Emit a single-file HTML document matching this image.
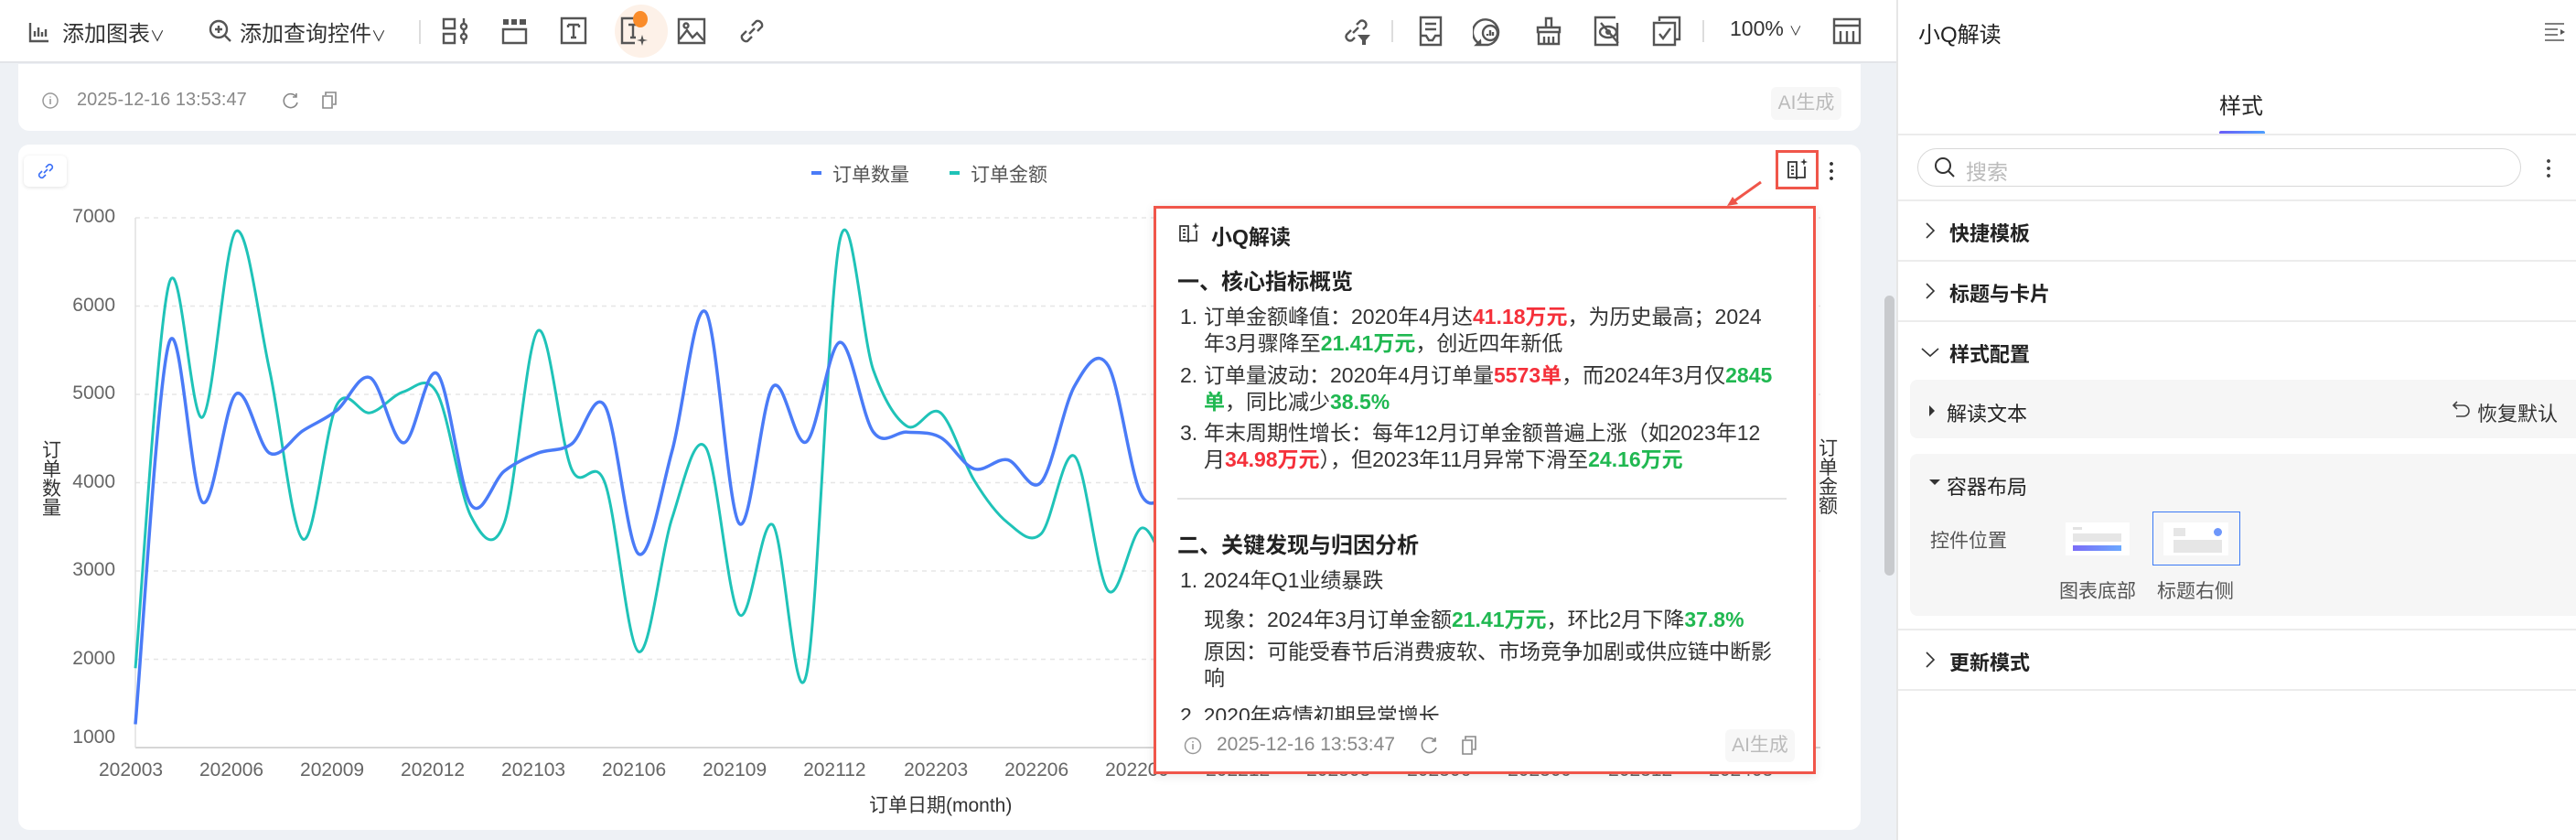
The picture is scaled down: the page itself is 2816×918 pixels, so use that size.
<!DOCTYPE html>
<html><head><meta charset="utf-8">
<style>
*{margin:0;padding:0;box-sizing:border-box}
body{width:2816px;height:918px;overflow:hidden;background:#eef1f5;font-family:"Liberation Sans","Noto Sans CJK SC",sans-serif;color:#333;position:relative}
.a{position:absolute;white-space:nowrap}
.tb{left:0;top:0;width:2073px;height:69px;background:#fff;border-bottom:2px solid #e2e4e8}
.tt{font-size:24px;color:#333;top:17px}
.ic{stroke:#555;fill:none;stroke-width:2.4}
.card{background:#fff;border-radius:12px}
.yl{font-size:21px;color:#666;text-align:right;width:60px;left:66px}
.xl{font-size:21px;color:#666;top:830px}
.pp{font-size:23px;color:#333;line-height:29px}
.r{color:#f5303a;font-weight:bold}
.g{color:#20b851;font-weight:bold}
.side{left:2073px;top:0;width:743px;height:918px;background:#fff;border-left:2px solid #e6e6e6}
.row{font-size:22px;font-weight:bold;color:#222}
.hr{height:2px;background:#ececec;left:2075px;width:741px}
</style></head><body>
<!-- toolbar -->
<div class="a tb"></div>
<svg class="a" style="left:30px;top:22px" width="26" height="26" viewBox="0 0 26 26"><path class="ic" d="M3 3V23H23M8 18V12M12 18V8M16 18V13M20 18V10" stroke-width="2"/></svg>
<div class="a tt" style="left:68px">添加图表<span style="font-size:16px">∨</span></div>
<svg class="a" style="left:227px;top:20px" width="28" height="28" viewBox="0 0 28 28"><circle class="ic" cx="12" cy="12" r="9"/><path class="ic" d="M12 8V16M8 12H16M19 19L25 25"/></svg>
<div class="a tt" style="left:262px">添加查询控件<span style="font-size:16px">∨</span></div>
<div class="a" style="left:458px;top:22px;width:2px;height:26px;background:#ddd"></div>
<svg class="a" style="left:483px;top:18px" width="30" height="32" viewBox="0 0 30 32"><path class="ic" d="M2 3H14V13H2ZM2 19H14V29H2ZM24 2V30"/><circle cx="24" cy="11" r="3" fill="#fff" stroke="#555" stroke-width="2.4"/><circle cx="24" cy="22" r="3" fill="#fff" stroke="#555" stroke-width="2.4"/></svg>
<svg class="a" style="left:548px;top:19px" width="30" height="30" viewBox="0 0 30 30"><path d="M2 2H8V8H2ZM11 2H17V8H11ZM20 2H27V8H20Z" fill="#555"/><path class="ic" d="M2 13H27V28H2Z"/></svg>
<svg class="a" style="left:612px;top:18px" width="30" height="31" viewBox="0 0 30 31"><path class="ic" d="M2 2H28V29H2Z"/><path class="ic" d="M9 9H21M15 9V23M12 23H18M9 9V12M21 9V12"/></svg>
<div class="a" style="left:672px;top:5px;width:58px;height:58px;border-radius:50%;background:#fdf1e8"></div>
<svg class="a" style="left:678px;top:18px" width="32" height="32" viewBox="0 0 32 32"><path class="ic" d="M22 2H2V29H16"/><path class="ic" d="M9 9H19M14 9V23M11 23H17"/><path d="M24 20L25.5 25L30 26L25.5 27L24 32L22.5 27L18 26L22.5 25Z" fill="#555"/></svg>
<div class="a" style="left:692px;top:12px;width:16px;height:18px;border-radius:50%;background:#fa8c2a"></div>
<svg class="a" style="left:740px;top:19px" width="32" height="30" viewBox="0 0 32 30"><path class="ic" d="M2 2H30V28H2Z"/><path class="ic" d="M3 24L11 14L17 22L22 17L29 25"/><circle cx="10" cy="9" r="2.5" class="ic" stroke-width="2"/></svg>
<svg class="a" style="left:806px;top:18px" width="32" height="32" viewBox="0 0 32 32"><path class="ic" d="M13 19L19 13M10 16L5 21A5 5 0 0 0 11 27L16 22M16 10L21 5A5 5 0 0 1 27 11L22 16"/></svg>
<!-- right tools -->
<svg class="a" style="left:1469px;top:19px" width="30" height="32" viewBox="0 0 30 32"><path class="ic" d="M10 17L16 11M8 14L3 19A4.5 4.5 0 0 0 9 25L12 22M14 8L18 4A4.5 4.5 0 0 1 24 10L21 13"/><path d="M15 19H29L24 25V30H20V25Z" fill="#555"/></svg>
<div class="a" style="left:1521px;top:22px;width:2px;height:24px;background:#ddd"></div>
<svg class="a" style="left:1551px;top:17px" width="26" height="34" viewBox="0 0 26 34"><path class="ic" d="M2 2H24V32H2ZM7 9H19M7 15H19M2 22L8 22L11 27H15L18 22H24"/></svg>
<svg class="a" style="left:1610px;top:18px" width="34" height="34" viewBox="0 0 34 34"><path class="ic" d="M8 30A14 14 0 1 1 17 31H4L8 27A14 14 0 0 1 8 30"/><circle class="ic" cx="19" cy="18" r="8"/><path class="ic" d="M16 21V19M19 21V15M22 21V17" stroke-width="2"/></svg>
<svg class="a" style="left:1678px;top:18px" width="30" height="32" viewBox="0 0 30 32"><path class="ic" d="M12 2H18V12H12ZM3 12H27V17H3ZM4 17V30H26V17M10 22V30M15 22V30M20 22V30"/></svg>
<svg class="a" style="left:1742px;top:17px" width="32" height="34" viewBox="0 0 32 34"><path class="ic" d="M24 2H2V32H26V8"/><ellipse class="ic" cx="16" cy="18" rx="9" ry="6"/><circle cx="16" cy="18" r="3" fill="#555"/><path class="ic" d="M8 8L27 30"/></svg>
<svg class="a" style="left:1806px;top:17px" width="32" height="34" viewBox="0 0 32 34"><path class="ic" d="M8 6V2H30V26H26M2 8H25V32H2ZM8 20L12 25L20 14"/></svg>
<div class="a" style="left:1861px;top:22px;width:2px;height:24px;background:#ddd"></div>
<div class="a tt" style="left:1891px;font-size:23px;top:18px">100%<span style="font-size:14px;margin-left:6px">∨</span></div>
<svg class="a" style="left:2003px;top:19px" width="32" height="30" viewBox="0 0 32 30"><path class="ic" d="M2 2H30V28H2ZM2 9H30M9 15V28M16 15V28M23 15V28"/></svg>

<!-- card1 -->
<div class="a card" style="left:20px;top:70px;width:2014px;height:73px;border-radius:0 0 12px 12px"></div>
<svg class="a" style="left:46px;top:101px" width="18" height="18" viewBox="0 0 18 18"><circle cx="9" cy="9" r="8" fill="none" stroke="#999" stroke-width="1.5"/><path d="M9 7V13M9 4.5V5.5" stroke="#999" stroke-width="1.6"/></svg>
<div class="a" style="left:84px;top:98px;font-size:20px;color:#888">2025-12-16 13:53:47</div>
<svg class="a" style="left:308px;top:100px" width="20" height="20" viewBox="0 0 20 20"><path d="M16 6A7.5 7.5 0 1 0 17 12M16 2V6H12" fill="none" stroke="#888" stroke-width="1.6"/></svg>
<svg class="a" style="left:351px;top:100px" width="18" height="20" viewBox="0 0 18 20"><path d="M5 4V1H16V14H13M2 5H12V18H2Z" fill="none" stroke="#888" stroke-width="1.6"/></svg>
<div class="a" style="left:1936px;top:95px;width:77px;height:36px;background:#f7f7f7;border-radius:6px;font-size:21px;color:#bbb;text-align:center;line-height:36px">AI生成</div>

<!-- chart card -->
<div class="a card" style="left:20px;top:158px;width:2014px;height:749px"></div>
<div class="a" style="left:26px;top:170px;width:47px;height:34px;border-radius:6px;background:#fff;box-shadow:0 1px 4px rgba(0,0,0,.12)"></div>
<svg class="a" style="left:40px;top:177px" width="20" height="20" viewBox="0 0 20 20"><path d="M8 12L12 8M6 10L3 13A3 3 0 0 0 7 17L10 14M10 6L13 3A3 3 0 0 1 17 7L14 10" fill="none" stroke="#3a6ff7" stroke-width="1.6"/></svg>
<div class="a" style="left:887px;top:187px;width:11px;height:4px;background:#4a7bf7"></div>
<div class="a" style="left:910px;top:175px;font-size:21px;color:#555">订单数量</div>
<div class="a" style="left:1038px;top:187px;width:11px;height:4px;background:#1fc3b8"></div>
<div class="a" style="left:1061px;top:175px;font-size:21px;color:#555">订单金额</div>
<div class="a yl" style="top:225px">7000</div>
<div class="a yl" style="top:322px">6000</div>
<div class="a yl" style="top:418px">5000</div>
<div class="a yl" style="top:515px">4000</div>
<div class="a yl" style="top:611px">3000</div>
<div class="a yl" style="top:708px">2000</div>
<div class="a yl" style="top:794px">1000</div>
<div class="a" style="left:46px;top:482px;width:24px;font-size:21px;line-height:21px;color:#333;white-space:normal">订单数量</div>
<div class="a" style="left:1988px;top:480px;width:24px;font-size:21px;line-height:21px;color:#333;white-space:normal">订单金额</div>
<svg class="a" id="ch" style="left:0;top:0" width="2000" height="918"></svg>
<div class="a" style="left:950px;top:864px;font-size:21px;color:#333">订单日期(month)</div>
<div id="xls"></div>
<!-- scrollbar -->
<div class="a" style="left:2060px;top:323px;width:11px;height:306px;border-radius:6px;background:#c8cacd"></div>

<!-- icon button -->
<div class="a" style="left:1932px;top:164px;width:58px;height:44px;background:#fff"></div>
<div class="a" style="left:1941px;top:164px;width:47px;height:43px;border:3px solid #f0564a"></div>
<svg class="a" style="left:1953px;top:172px" width="24" height="26" viewBox="0 0 24 26"><path d="M11 5H2V22H11ZM11 5V24M11 22H20V10M5 10H8M5 14H8M5 18H8" fill="none" stroke="#333" stroke-width="1.8"/><path d="M19 1L20 4L23 5L20 6L19 9L18 6L15 5L18 4Z" fill="#333"/></svg>
<div class="a" style="left:2000px;top:175px;width:4px;height:24px;background:radial-gradient(circle,#333 1.8px,transparent 2px) 0 0/4px 8px"></div>
<svg class="a" style="left:1880px;top:195px" width="50" height="35" viewBox="0 0 50 35"><path d="M45 4L14 26" stroke="#f0564a" stroke-width="3"/><path d="M8 30L20 28L14 20Z" fill="#f0564a"/></svg>

<!-- popup -->
<div class="a" style="left:1261px;top:225px;width:724px;height:621px;background:#fff;border:3px solid #f0564a;box-shadow:0 2px 10px rgba(0,0,0,.1)"></div>
<svg class="a" style="left:1288px;top:243px" width="24" height="24" viewBox="0 0 24 24"><path d="M11 4H2V20H11ZM11 4V22M11 20H20V9M5 8H8M5 12H8M5 16H8" fill="none" stroke="#333" stroke-width="1.7"/><path d="M19 0L20 3L23 4L20 5L19 8L18 5L15 4L18 3Z" fill="#333"/></svg>
<div class="a" style="left:1324px;top:240px;font-size:23px;font-weight:bold;color:#222">小Q解读</div>
<div class="a" style="left:1287px;top:288px;font-size:24px;font-weight:bold;color:#222">一、核心指标概览</div>
<div class="a pp" style="left:1290px;top:332px">1.</div>
<div class="a pp" style="left:1316px;top:332px">订单金额峰值：2020年4月达<span class="r">41.18万元</span>，为历史最高；2024</div>
<div class="a pp" style="left:1316px;top:361px">年3月骤降至<span class="g">21.41万元</span>，创近四年新低</div>
<div class="a pp" style="left:1290px;top:396px">2.</div>
<div class="a pp" style="left:1316px;top:396px">订单量波动：2020年4月订单量<span class="r">5573单</span>，而2024年3月仅<span class="g">2845</span></div>
<div class="a pp" style="left:1316px;top:425px"><span class="g">单</span>，同比减少<span class="g">38.5%</span></div>
<div class="a pp" style="left:1290px;top:459px">3.</div>
<div class="a pp" style="left:1316px;top:459px">年末周期性增长：每年12月订单金额普遍上涨（如2023年12</div>
<div class="a pp" style="left:1316px;top:488px">月<span class="r">34.98万元</span>），但2023年11月异常下滑至<span class="g">24.16万元</span></div>
<div class="a" style="left:1287px;top:544px;width:666px;height:2px;background:#e3e3e3"></div>
<div class="a" style="left:1287px;top:576px;font-size:24px;font-weight:bold;color:#222">二、关键发现与归因分析</div>
<div class="a pp" style="left:1290px;top:620px">1. 2024年Q1业绩暴跌</div>
<div class="a pp" style="left:1316px;top:663px">现象：2024年3月订单金额<span class="g">21.41万元</span>，环比2月下降<span class="g">37.8%</span></div>
<div class="a pp" style="left:1316px;top:698px">原因：可能受春节后消费疲软、市场竞争加剧或供应链中断影</div>
<div class="a pp" style="left:1316px;top:727px">响</div>
<div class="a" style="left:1264px;top:768px;width:700px;height:19px;overflow:hidden"><div class="a pp" style="left:26px;top:0">2. 2020年疫情初期异常增长</div></div>
<svg class="a" style="left:1294px;top:805px" width="20" height="20" viewBox="0 0 20 20"><circle cx="10" cy="10" r="8.5" fill="none" stroke="#999" stroke-width="1.5"/><path d="M10 8V14M10 5V6.5" stroke="#999" stroke-width="1.6"/></svg>
<div class="a" style="left:1330px;top:802px;font-size:21px;color:#888">2025-12-16 13:53:47</div>
<svg class="a" style="left:1552px;top:804px" width="22" height="22" viewBox="0 0 22 22"><path d="M17 6A8 8 0 1 0 18 13M17 2V6H13" fill="none" stroke="#888" stroke-width="1.6"/></svg>
<svg class="a" style="left:1596px;top:804px" width="20" height="22" viewBox="0 0 20 22"><path d="M6 4V1H17V15H14M3 5H13V20H3Z" fill="none" stroke="#888" stroke-width="1.6"/></svg>
<div class="a" style="left:1886px;top:797px;width:76px;height:36px;background:#f7f7f7;border-radius:6px;font-size:21px;color:#bbb;text-align:center;line-height:36px">AI生成</div>

<!-- sidebar -->
<div class="a side"></div>
<div class="a" style="left:2097px;top:18px;font-size:24px;color:#222">小Q解读</div>
<svg class="a" style="left:2781px;top:24px" width="24" height="22" viewBox="0 0 24 22"><path d="M1 2H22M1 8H15M1 14H15M1 20H22" stroke="#555" stroke-width="1.6"/><path d="M18 8L23 11L18 14Z" fill="#555"/></svg>
<div class="a" style="left:2426px;top:96px;font-size:24px;color:#222">样式</div>
<div class="a" style="left:2426px;top:143px;width:50px;height:4px;border-radius:2px;background:linear-gradient(90deg,#6b5cf7,#4ea0ff)"></div>
<div class="a hr" style="top:146px"></div>
<div class="a" style="left:2096px;top:162px;width:660px;height:42px;border:1.5px solid #d8d8d8;border-radius:21px"></div>
<svg class="a" style="left:2114px;top:171px" width="24" height="24" viewBox="0 0 24 24"><circle cx="10" cy="10" r="8" fill="none" stroke="#333" stroke-width="2"/><path d="M16 16L22 22" stroke="#333" stroke-width="2"/></svg>
<div class="a" style="left:2149px;top:169px;font-size:23px;color:#bbb">搜索</div>
<div class="a" style="left:2784px;top:172px;width:4px;height:24px;background:radial-gradient(circle,#444 1.8px,transparent 2px) 0 0/4px 8px"></div>
<div class="a hr" style="top:218px"></div>
<svg class="a" style="left:2103px;top:243px" width="14" height="18" viewBox="0 0 14 18"><path d="M3 1L11 9L3 17" fill="none" stroke="#333" stroke-width="1.6"/></svg>
<div class="a row" style="left:2131px;top:238px">快捷模板</div>
<div class="a hr" style="top:284px"></div>
<svg class="a" style="left:2103px;top:309px" width="14" height="18" viewBox="0 0 14 18"><path d="M3 1L11 9L3 17" fill="none" stroke="#333" stroke-width="1.6"/></svg>
<div class="a row" style="left:2131px;top:304px">标题与卡片</div>
<div class="a hr" style="top:350px"></div>
<svg class="a" style="left:2100px;top:378px" width="20" height="14" viewBox="0 0 20 14"><path d="M1 3L10 11L19 3" fill="none" stroke="#333" stroke-width="1.6"/></svg>
<div class="a row" style="left:2131px;top:370px">样式配置</div>
<div class="a" style="left:2088px;top:415px;width:728px;height:64px;background:#f6f6f6;border-radius:8px 0 0 8px"></div>
<svg class="a" style="left:2108px;top:442px" width="8" height="14" viewBox="0 0 8 14"><path d="M1 1L7 7L1 13Z" fill="#333"/></svg>
<div class="a" style="left:2128px;top:435px;font-size:22px;color:#222">解读文本</div>
<svg class="a" style="left:2679px;top:437px" width="22" height="22" viewBox="0 0 22 22"><path d="M3 6H14A6 6 0 0 1 14 18H6M7 2L3 6L7 10" fill="none" stroke="#444" stroke-width="1.6"/></svg>
<div class="a" style="left:2708px;top:435px;font-size:22px;color:#333">恢复默认</div>
<div class="a" style="left:2088px;top:496px;width:728px;height:177px;background:#f6f6f6;border-radius:8px 0 0 8px"></div>
<svg class="a" style="left:2108px;top:523px" width="14" height="8" viewBox="0 0 14 8"><path d="M1 1L13 1L7 7Z" fill="#333"/></svg>
<div class="a" style="left:2128px;top:515px;font-size:22px;color:#222">容器布局</div>
<div class="a" style="left:2110px;top:575px;font-size:21px;color:#555">控件位置</div>
<div class="a" style="left:2258px;top:571px;width:70px;height:36px;background:#fff"></div>
<div class="a" style="left:2266px;top:576px;width:10px;height:3px;background:#e3e3e3"></div>
<div class="a" style="left:2266px;top:583px;width:53px;height:9px;background:#e6e6e6"></div>
<div class="a" style="left:2266px;top:596px;width:53px;height:6px;background:linear-gradient(90deg,#7b6cf7,#6aa8ff)"></div>
<div class="a" style="left:2353px;top:559px;width:96px;height:59px;border:1.5px solid #3b7af5;background:#f6f6f6"></div>
<div class="a" style="left:2365px;top:571px;width:71px;height:36px;background:#fff"></div>
<div class="a" style="left:2376px;top:577px;width:13px;height:9px;background:#e6e6e6"></div>
<div class="a" style="left:2420px;top:577px;width:9px;height:9px;border-radius:50%;background:#6e97fb"></div>
<div class="a" style="left:2376px;top:590px;width:53px;height:14px;background:#e6e6e6"></div>
<div class="a" style="left:2251px;top:630px;font-size:21px;color:#555">图表底部</div>
<div class="a" style="left:2358px;top:630px;font-size:21px;color:#555">标题右侧</div>
<div class="a hr" style="top:687px"></div>
<svg class="a" style="left:2103px;top:712px" width="14" height="18" viewBox="0 0 14 18"><path d="M3 1L11 9L3 17" fill="none" stroke="#333" stroke-width="1.6"/></svg>
<div class="a row" style="left:2131px;top:707px">更新模式</div>
<div class="a hr" style="top:753px"></div>

<script>
var B=[1264,5579,3777,5005,4335,4590,4817,5188,4452,5233,3751,4132,4335,4437,4868,3193,4360,5934,3538,5086,4462,5589,4573,4573,4513,4157,4259,4005,5096,5325,3853,4000,4500,5200,4800,4300,5000,4600,4200,4700,5100,4400,4000,4600,4900,4300,3900,4500,4200,3800];
var T=[1899,6249,4741,6848,5274,3360,4878,4792,5031,5010,3624,3548,5721,4157,3995,2086,3599,4401,2507,3523,1822,6746,5274,4640,4792,4030,3548,3421,4299,2776,3487,3015,4000,5000,4200,3800,4600,4400,3900,4800,5200,4100,3600,4300,4700,3900,3500,4200,4000,3600];
function X(i){return 148+36.67*i}function Y(v){return 817-(v-1000)*0.0965}
function path(d){var p=d.map(function(v,i){return[X(i),Y(v)]});var s="M"+p[0][0]+" "+p[0][1];
for(var i=0;i<p.length-1;i++){var p0=p[i-1]||p[i],p1=p[i],p2=p[i+1],p3=p[i+2]||p2;
s+=" C"+(p1[0]+(p2[0]-p0[0])/6)+" "+(p1[1]+(p2[1]-p0[1])/6)+" "+(p2[0]-(p3[0]-p1[0])/6)+" "+(p2[1]-(p3[1]-p1[1])/6)+" "+p2[0]+" "+p2[1];}return s}
var g='';for(var k=0;k<7;k++){var y=Y(1000+k*1000);g+='<line x1="148" x2="1990" y1="'+y+'" y2="'+y+'" stroke="'+(k==0?'#d6d6d6':'#e6e6e6')+'" stroke-width="'+(k==0?2:1.5)+'" '+(k==0?'':'stroke-dasharray="5 5"')+'/>';}
g+='<line x1="148" x2="148" y1="238" y2="817" stroke="#e0e0e0" stroke-width="1.5"/>';
g+='<path d="'+path(T)+'" fill="none" stroke="#1fc3b8" stroke-width="3"/>';
g+='<path d="'+path(B)+'" fill="none" stroke="#4a7bf7" stroke-width="3.5"/>';
document.getElementById('ch').innerHTML=g;
var L=['202003','202006','202009','202012','202103','202106','202109','202112','202203','202206','202209','202212','202303','202306','202309','202312','202403'],h='';
for(var i=0;i<L.length;i++)h+='<div class="a xl" style="left:'+(X(i*3)-40)+'px">'+L[i]+'</div>';
document.getElementById('xls').innerHTML=h;
</script>
</body></html>
